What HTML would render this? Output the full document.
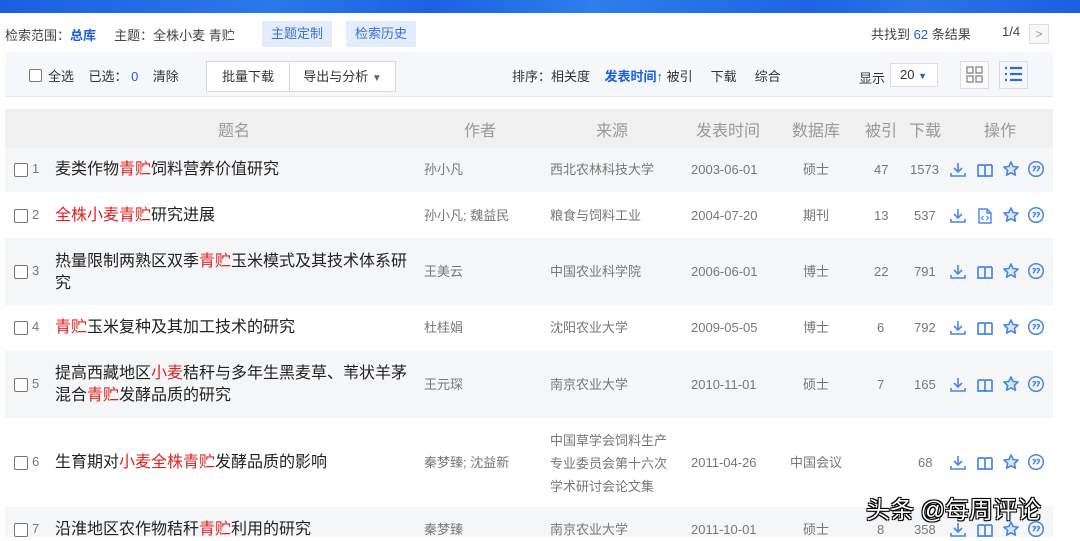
<!DOCTYPE html>
<html><head><meta charset="utf-8"><style>
*{margin:0;padding:0;box-sizing:border-box}
body{width:1080px;height:537px;overflow:hidden;background:#fff;font-family:"Liberation Sans","Noto Sans CJK SC",sans-serif;position:relative;color:#333}
.a{position:absolute;white-space:nowrap}
.top{position:absolute;left:0;top:0;width:1080px;height:13px;background:linear-gradient(100deg,#1a5fe0 0%,#2b78ea 25%,#1a62e2 40%,#2f7eec 55%,#1c64e2 75%,#2c74e8 85%,#1a5fe0 100%)}
.f13{font-size:13px}
.blue{color:#1a5fe0}
.btn{position:absolute;background:#e3ecfb;color:#3b6fd8;font-size:13px;text-align:center;line-height:26px;height:26px}
.bar{position:absolute;left:5px;top:52px;width:1048px;height:45px;background:#f5f7fa;border-bottom:1px solid #e1e6ef}
.hd{position:absolute;left:5px;top:109px;width:1048px;height:39px;background:#f0f0f0}
.hd span{position:absolute;top:8px;font-size:16px;color:#999}
.row{position:absolute;left:5px;width:1048px}
.g{background:#f5f6f8}
.cb{position:absolute;left:14px;width:14px;height:14px;border:1.5px solid #777;border-radius:2px;background:#fff}
.num{position:absolute;left:32px;font-size:13px;color:#777}
.t{position:absolute;left:55px;font-size:16px;color:#222;line-height:22px}
.r{color:#e02020}
.m{position:absolute;font-size:13px;color:#777;line-height:22px}
.ic{position:absolute;width:18px;height:18px}
</style></head><body>
<div class="top"></div>
<div class="a f13" style="left:5px;top:25px;color:#444">检索范围：<b class="blue" style="font-weight:bold">总库</b>&nbsp;&nbsp;&nbsp;&nbsp;&nbsp;主题：全株小麦 青贮</div>
<div class="btn" style="left:262px;top:21px;width:70px">主题定制</div>
<div class="btn" style="left:346px;top:21px;width:70px">检索历史</div>
<div class="a f13" style="left:871px;top:24px;color:#444">共找到 <span class="blue">62</span> 条结果</div>
<div class="a f13" style="left:1002px;top:24px;color:#444">1/4</div>
<div class="a" style="left:1029px;top:24px;width:20px;height:20px;border:1px solid #ddd;background:#f8f8f8;color:#999;font-size:12px;text-align:center;line-height:18px">&gt;</div>
<div class="bar"></div>
<div class="a" style="left:29px;top:69px;width:13px;height:13px;border:1px solid #777;border-radius:2px;background:#fff"></div>
<div class="a f13" style="left:48px;top:66px;color:#333">全选&nbsp;&nbsp;&nbsp;&nbsp;已选：&nbsp;<span class="blue">0</span>&nbsp;&nbsp;&nbsp;&nbsp;清除</div>
<div class="a f13" style="left:206px;top:61px;width:84px;height:31px;border:1px solid #d8d8d8;background:#fff;text-align:center;line-height:29px">批量下载</div>
<div class="a f13" style="left:289px;top:61px;width:107px;height:31px;border:1px solid #d8d8d8;background:#fff;text-align:center;line-height:29px">导出与分析 <span style="color:#666;font-size:10px">▼</span></div>
<div class="a f13" style="left:512px;top:66px;color:#333">排序：相关度&nbsp;&nbsp;&nbsp;&nbsp;<b class="blue">发表时间</b><span style="color:#1a5fe0">↑</span> 被引&nbsp;&nbsp;&nbsp;&nbsp;&nbsp;下载&nbsp;&nbsp;&nbsp;&nbsp;&nbsp;综合</div>
<div class="a f13" style="left:859px;top:68px;color:#333">显示</div>
<div class="a f13" style="left:890px;top:63px;width:48px;height:24px;border:1px solid #ddd;background:#fff;line-height:22px;padding-left:9px">20 <span style="color:#1a5fe0;font-size:9px">▼</span></div>
<div class="a" style="left:960px;top:61px;width:29px;height:28px;border:1px solid #ddd;background:#fbfbfb"><svg width="27" height="26"><g fill="none" stroke="#888" stroke-width="1.3"><rect x="6" y="5" width="6" height="6"/><rect x="15" y="5" width="6" height="6"/><rect x="6" y="14" width="6" height="6"/><rect x="15" y="14" width="6" height="6"/></g></svg></div>
<div class="a" style="left:999px;top:61px;width:29px;height:28px;border:1px solid #ddd;background:#f4f7fd"><svg width="27" height="26"><g stroke="#2a6ae6" stroke-width="2.2"><line x1="5" y1="6" x2="7" y2="6"/><line x1="10" y1="6" x2="22" y2="6"/><line x1="5" y1="12" x2="7" y2="12"/><line x1="10" y1="12" x2="22" y2="12"/><line x1="5" y1="18" x2="7" y2="18"/><line x1="10" y1="18" x2="22" y2="18"/></g></svg></div>
<div class="hd"><span style="left:213px">题名</span><span style="left:459px">作者</span><span style="left:591px">来源</span><span style="left:691px">发表时间</span><span style="left:787px">数据库</span><span style="left:860px">被引</span><span style="left:904px">下载</span><span style="left:979px">操作</span></div>

<div class="row g" style="top:148px;height:44px"></div>
<div class="row" style="top:192px;height:46px"></div>
<div class="row g" style="top:238px;height:67px"></div>
<div class="row" style="top:305px;height:46px"></div>
<div class="row g" style="top:351px;height:67px"></div>
<div class="row" style="top:418px;height:89px"></div>
<div class="row g" style="top:507px;height:30px"></div>

<svg width="0" height="0" style="position:absolute"><defs>
<g id="dl"><path d="M9 2v9M5 7l4 4 4-4M2 12v3h14v-3" fill="none" stroke="#4a86e8" stroke-width="1.6"/></g>
<g id="bk"><path d="M2 4h5.5c1 0 1.5.6 1.5 1.5V16M16 4h-5.5C9.5 4 9 4.6 9 5.5M2 4v11h14V4" fill="none" stroke="#4a86e8" stroke-width="1.7"/></g>
<g id="st"><path d="M9 2l2.1 4.5 4.9.6-3.6 3.3 1 4.8L9 12.8 4.6 15.2l1-4.8L2 7.1l4.9-.6z" fill="#dbe6fa" stroke="#4a86e8" stroke-width="1.6" stroke-linejoin="round"/></g>
<g id="qt"><circle cx="9" cy="9" r="7.3" fill="none" stroke="#4a86e8" stroke-width="1.5"/><path d="M6 7.5a1.2 1.2 0 1 1 1.4 1.3c0 1.2-.6 2-1.6 2.4M10 7.5a1.2 1.2 0 1 1 1.4 1.3c0 1.2-.6 2-1.6 2.4" fill="none" stroke="#4a86e8" stroke-width="1.4"/></g>
<g id="hf"><path d="M3 2h8l4 4v10H3z M11 2v4h4" fill="none" stroke="#4a86e8" stroke-width="1.4"/><path d="M7.5 9l-2 2 2 2M10.5 9l2 2-2 2" fill="none" stroke="#4a86e8" stroke-width="1.1"/></g>
</defs></svg>

<div class="cb" style="top:163px"></div><div class="num" style="top:161px">1</div>
<div class="t" style="top:159px">麦类作物<span class="r">青贮</span>饲料营养价值研究</div>
<div class="m" style="left:424px;top:159px">孙小凡</div><div class="m" style="left:550px;top:159px">西北农林科技大学</div><div class="m" style="left:691px;top:159px">2003-06-01</div><div class="m" style="left:803px;top:159px">硕士</div><div class="m" style="left:874px;top:159px">47</div><div class="m" style="left:910px;top:159px">1573</div>
<svg class="ic" style="left:949px;top:161px"><use href="#dl"/></svg><svg class="ic" style="left:976px;top:161px"><use href="#bk"/></svg><svg class="ic" style="left:1002px;top:160px"><use href="#st"/></svg><svg class="ic" style="left:1027px;top:160px"><use href="#qt"/></svg>

<div class="cb" style="top:209px"></div><div class="num" style="top:207px">2</div>
<div class="t" style="top:205px"><span class="r">全株小麦青贮</span>研究进展</div>
<div class="m" style="left:424px;top:205px">孙小凡; 魏益民</div><div class="m" style="left:550px;top:205px">粮食与饲料工业</div><div class="m" style="left:691px;top:205px">2004-07-20</div><div class="m" style="left:803px;top:205px">期刊</div><div class="m" style="left:874px;top:205px">13</div><div class="m" style="left:914px;top:205px">537</div>
<svg class="ic" style="left:949px;top:207px"><use href="#dl"/></svg><svg class="ic" style="left:976px;top:207px"><use href="#hf"/></svg><svg class="ic" style="left:1002px;top:206px"><use href="#st"/></svg><svg class="ic" style="left:1027px;top:206px"><use href="#qt"/></svg>

<div class="cb" style="top:265px"></div><div class="num" style="top:263px">3</div>
<div class="t" style="top:251px">热量限制两熟区双季<span class="r">青贮</span>玉米模式及其技术体系研<br>究</div>
<div class="m" style="left:424px;top:261px">王美云</div><div class="m" style="left:550px;top:261px">中国农业科学院</div><div class="m" style="left:691px;top:261px">2006-06-01</div><div class="m" style="left:803px;top:261px">博士</div><div class="m" style="left:874px;top:261px">22</div><div class="m" style="left:914px;top:261px">791</div>
<svg class="ic" style="left:949px;top:263px"><use href="#dl"/></svg><svg class="ic" style="left:976px;top:263px"><use href="#bk"/></svg><svg class="ic" style="left:1002px;top:262px"><use href="#st"/></svg><svg class="ic" style="left:1027px;top:262px"><use href="#qt"/></svg>

<div class="cb" style="top:321px"></div><div class="num" style="top:319px">4</div>
<div class="t" style="top:317px"><span class="r">青贮</span>玉米复种及其加工技术的研究</div>
<div class="m" style="left:424px;top:317px">杜桂娟</div><div class="m" style="left:550px;top:317px">沈阳农业大学</div><div class="m" style="left:691px;top:317px">2009-05-05</div><div class="m" style="left:803px;top:317px">博士</div><div class="m" style="left:877px;top:317px">6</div><div class="m" style="left:914px;top:317px">792</div>
<svg class="ic" style="left:949px;top:319px"><use href="#dl"/></svg><svg class="ic" style="left:976px;top:319px"><use href="#bk"/></svg><svg class="ic" style="left:1002px;top:318px"><use href="#st"/></svg><svg class="ic" style="left:1027px;top:318px"><use href="#qt"/></svg>

<div class="cb" style="top:378px"></div><div class="num" style="top:376px">5</div>
<div class="t" style="top:363px">提高西藏地区<span class="r">小麦</span>秸秆与多年生黑麦草、苇状羊茅<br>混合<span class="r">青贮</span>发酵品质的研究</div>
<div class="m" style="left:424px;top:374px">王元琛</div><div class="m" style="left:550px;top:374px">南京农业大学</div><div class="m" style="left:691px;top:374px">2010-11-01</div><div class="m" style="left:803px;top:374px">硕士</div><div class="m" style="left:877px;top:374px">7</div><div class="m" style="left:914px;top:374px">165</div>
<svg class="ic" style="left:949px;top:376px"><use href="#dl"/></svg><svg class="ic" style="left:976px;top:376px"><use href="#bk"/></svg><svg class="ic" style="left:1002px;top:375px"><use href="#st"/></svg><svg class="ic" style="left:1027px;top:375px"><use href="#qt"/></svg>

<div class="cb" style="top:456px"></div><div class="num" style="top:454px">6</div>
<div class="t" style="top:452px">生育期对<span class="r">小麦全株青贮</span>发酵品质的影响</div>
<div class="m" style="left:424px;top:452px">秦梦臻; 沈益新</div>
<div class="m" style="left:550px;top:429px;line-height:23px">中国草学会饲料生产<br>专业委员会第十六次<br>学术研讨会论文集</div>
<div class="m" style="left:691px;top:452px">2011-04-26</div><div class="m" style="left:790px;top:452px">中国会议</div><div class="m" style="left:918px;top:452px">68</div>
<svg class="ic" style="left:949px;top:454px"><use href="#dl"/></svg><svg class="ic" style="left:976px;top:454px"><use href="#bk"/></svg><svg class="ic" style="left:1002px;top:453px"><use href="#st"/></svg><svg class="ic" style="left:1027px;top:453px"><use href="#qt"/></svg>

<div class="cb" style="top:523px"></div><div class="num" style="top:521px">7</div>
<div class="t" style="top:519px">沿淮地区农作物秸秆<span class="r">青贮</span>利用的研究</div>
<div class="m" style="left:424px;top:519px">秦梦臻</div><div class="m" style="left:550px;top:519px">南京农业大学</div><div class="m" style="left:691px;top:519px">2011-10-01</div><div class="m" style="left:803px;top:519px">硕士</div><div class="m" style="left:877px;top:519px">8</div><div class="m" style="left:914px;top:519px">358</div>
<svg class="ic" style="left:949px;top:521px"><use href="#dl"/></svg><svg class="ic" style="left:976px;top:521px"><use href="#bk"/></svg><svg class="ic" style="left:1002px;top:520px"><use href="#st"/></svg><svg class="ic" style="left:1027px;top:520px"><use href="#qt"/></svg>

<div class="a" style="left:866px;top:490px;font-size:24px;color:#fff;text-shadow:-1px -1px 0 #000,1px -1px 0 #000,-1px 1px 0 #000,1px 1px 0 #000,0 0 2px #000">头条 @每周评论</div>
</body></html>
